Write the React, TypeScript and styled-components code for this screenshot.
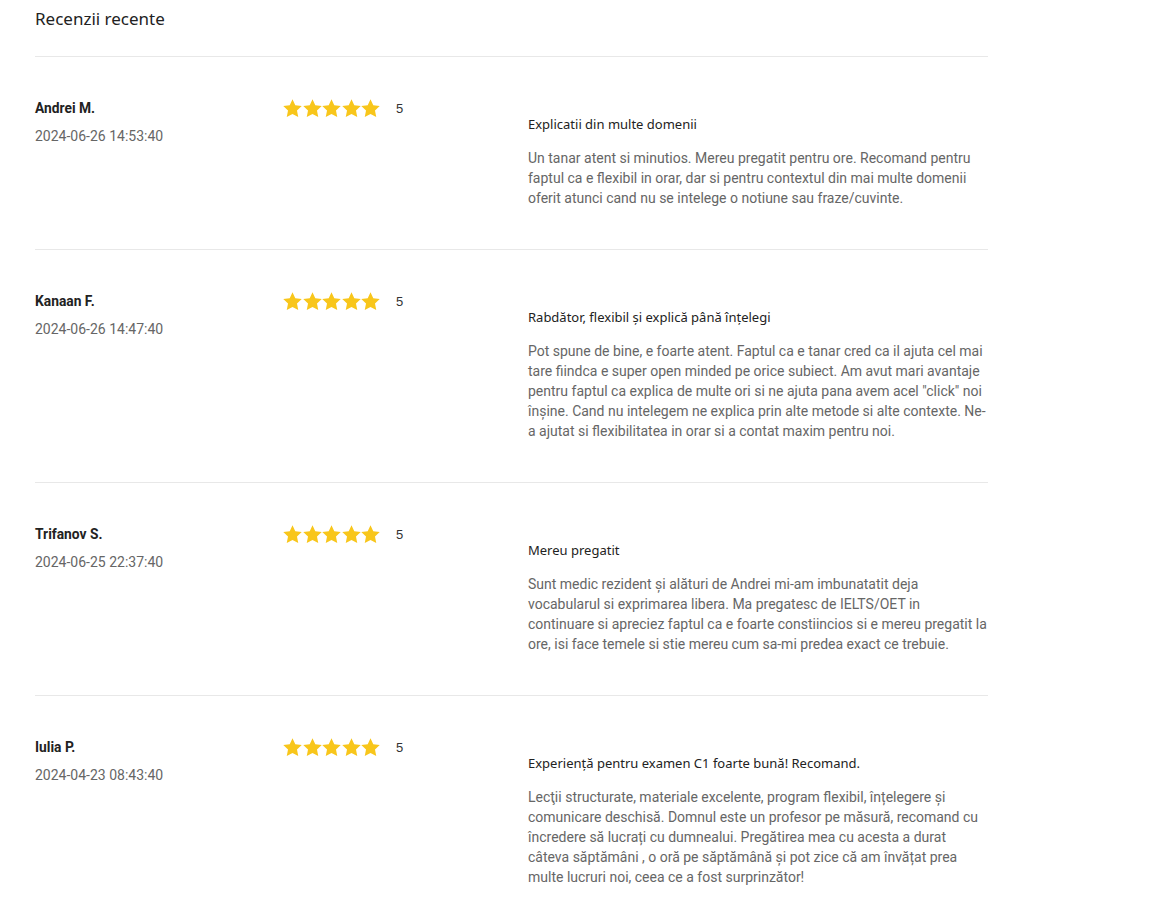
import React from "react";
import styled, { createGlobalStyle } from "styled-components";

const Global = createGlobalStyle`
  html, body { margin: 0; padding: 0; background: #fff; }
  body { font-family: Roboto, "Liberation Sans", Arial, sans-serif; }
`;

const Page = styled.div`
  width: 953px;
  padding: 0 0 0 35px;
`;

const Heading = styled.h2`
  margin: 0;
  padding-top: 7px;
  height: 49px;
  font-family: "Noto Sans", "Open Sans", sans-serif;
  font-weight: 400;
  font-size: 17px;
  line-height: 24px;
  color: #222;
  border-bottom: 1px solid #e8e8e8;
`;

const Row = styled.div`
  display: grid;
  grid-template-columns: 248px 245px 1fr;
  padding: 41px 0 41px;
  border-bottom: 1px solid #e8e8e8;
  &:last-child { border-bottom: none; }
`;

const Author = styled.div`
  display: flex;
  flex-direction: column;
  gap: 8px;
`;

const Name = styled.div`
  font-weight: 700;
  font-size: 13.8px;
  line-height: 20px;
  color: #222;
`;

const DateText = styled.div`
  font-size: 14px;
  line-height: 20px;
  color: #666;
`;

const Rating = styled.div`
  display: flex;
  align-items: center;
  height: 20px;
`;

const Stars = styled.div`
  display: flex;
  gap: 0.5px;
  margin-right: 16px;
`;

const Score = styled.span`
  font-family: "Liberation Sans", Arial, sans-serif;
  font-size: 13px;
  color: #333;
`;

const Content = styled.div`
  padding-top: 16px;
`;

const Title = styled.div`
  font-family: "Noto Sans", "Open Sans", sans-serif;
  font-size: 13px;
  line-height: 20px;
  color: #222;
  margin-bottom: 14px;
`;

const Body = styled.p`
  margin: 0;
  font-size: 14px;
  line-height: 20px;
  color: #666;
`;

const Star = () => (
  <svg width="19" height="19" viewBox="1.4 1.2 21.2 21.2">
    <path
      fill="#f8c61b"
      d="M12 1.6l3.1 6.6 7.2.9-5.3 5 1.4 7.2L12 17.8l-6.4 3.5 1.4-7.2-5.3-5 7.2-.9z"
    />
  </svg>
);

const reviews = [
  {
    name: "Andrei M.",
    date: "2024-06-26 14:53:40",
    title: "Explicatii din multe domenii",
    body: "Un tanar atent si minutios. Mereu pregatit pentru ore. Recomand pentru faptul ca e flexibil in orar, dar si pentru contextul din mai multe domenii oferit atunci cand nu se intelege o notiune sau fraze/cuvinte.",
  },
  {
    name: "Kanaan F.",
    date: "2024-06-26 14:47:40",
    title: "Rabdător, flexibil și explică până înțelegi",
    body: "Pot spune de bine, e foarte atent. Faptul ca e tanar cred ca il ajuta cel mai tare fiindca e super open minded pe orice subiect. Am avut mari avantaje pentru faptul ca explica de multe ori si ne ajuta pana avem acel \"click\" noi înșine. Cand nu intelegem ne explica prin alte metode si alte contexte. Ne-a ajutat si flexibilitatea in orar si a contat maxim pentru noi.",
  },
  {
    name: "Trifanov S.",
    date: "2024-06-25 22:37:40",
    title: "Mereu pregatit",
    body: "Sunt medic rezident și alături de Andrei mi-am imbunatatit deja vocabularul si exprimarea libera. Ma pregatesc de IELTS/OET in continuare si apreciez faptul ca e foarte constiincios si e mereu pregatit la ore, isi face temele si stie mereu cum sa-mi predea exact ce trebuie.",
  },
  {
    name: "Iulia P.",
    date: "2024-04-23 08:43:40",
    title: "Experiență pentru examen C1 foarte bună! Recomand.",
    body: "Lecţii structurate, materiale excelente, program flexibil, înțelegere și comunicare deschisă. Domnul este un profesor pe măsură, recomand cu încredere să lucrați cu dumnealui. Pregătirea mea cu acesta a durat câteva săptămâni , o oră pe săptămână și pot zice că am învățat prea multe lucruri noi, ceea ce a fost surprinzător!",
  },
];

export default function App() {
  return (
    <Page>
      <Global />
      <Heading>Recenzii recente</Heading>
      {reviews.map((r) => (
        <Row key={r.name}>
          <Author>
            <Name>{r.name}</Name>
            <DateText>{r.date}</DateText>
          </Author>
          <Rating>
            <Stars>
              {[0, 1, 2, 3, 4].map((i) => (
                <Star key={i} />
              ))}
            </Stars>
            <Score>5</Score>
          </Rating>
          <Content>
            <Title>{r.title}</Title>
            <Body>{r.body}</Body>
          </Content>
        </Row>
      ))}
    </Page>
  );
}
